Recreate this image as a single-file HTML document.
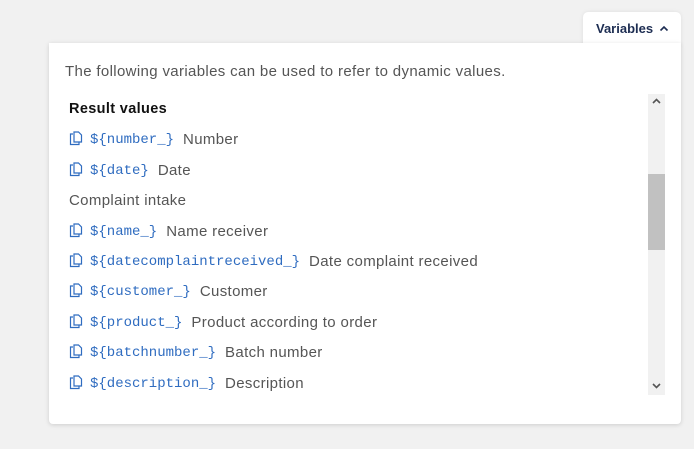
<!DOCTYPE html>
<html><head><style>
body{margin:0;width:694px;height:449px;background:#f1f1f1;font-family:"Liberation Sans",sans-serif;position:relative;overflow:hidden}
.tab{position:absolute;left:583px;top:12px;width:98px;height:34px;background:#fff;border-radius:5px 5px 0 0;box-shadow:0 0 4px rgba(0,0,0,.08)}
.tab span{position:absolute;left:13px;top:9px;font-size:13px;font-weight:bold;color:#1d2d52}
.panel{position:absolute;left:49px;top:43px;width:632px;height:381px;background:#fff;border-radius:0 0 4px 4px;box-shadow:0 1px 5px rgba(0,0,0,.15)}
.intro{position:absolute;left:16px;top:20px;font-size:15px;letter-spacing:0.35px;color:#555}
.row{position:absolute;left:20px;font-size:15px;letter-spacing:0.35px;color:#555;height:20px;line-height:20px;white-space:nowrap;margin-top:1px}
.row code{font-family:"Liberation Mono",monospace;color:#2f6cc0;font-size:14px;letter-spacing:0;margin-right:9px;vertical-align:1px}
.row svg{vertical-align:-2px;margin-right:6px}
.sb{position:absolute;left:599px;top:51px;width:17px;height:301px;background:#f1f1f1}
.th{position:absolute;left:0;top:80px;width:17px;height:76px;background:#c1c1c1}
</style></head><body>
<div class="tab"><span>Variables</span><svg style="position:absolute;left:76px;top:13px" width="10" height="7" viewBox="0 0 10 7"><path d="M1.5 5.5L5 2l3.5 3.5" stroke="#1d2d52" stroke-width="1.6" fill="none"/></svg></div>
<div class="panel">
<div class="intro">The following variables can be used to refer to dynamic values.</div>
<div class="row" style="top:55px;color:#111;font-weight:bold;font-size:14.5px">Result values</div>
<div class="row" style="top:86px"><svg width="15" height="15" viewBox="0 0 15 15" fill="none" stroke="#2f6cc0" stroke-width="1.2"><path d="M4 3H1.5v10.5H10V11"/><path d="M5 1h4.5L12.5 4v7H5z"/></svg><code>${number_}</code>Number</div>
<div class="row" style="top:117px"><svg width="15" height="15" viewBox="0 0 15 15" fill="none" stroke="#2f6cc0" stroke-width="1.2"><path d="M4 3H1.5v10.5H10V11"/><path d="M5 1h4.5L12.5 4v7H5z"/></svg><code>${date}</code>Date</div>
<div class="row" style="top:147px">Complaint intake</div>
<div class="row" style="top:178px"><svg width="15" height="15" viewBox="0 0 15 15" fill="none" stroke="#2f6cc0" stroke-width="1.2"><path d="M4 3H1.5v10.5H10V11"/><path d="M5 1h4.5L12.5 4v7H5z"/></svg><code>${name_}</code>Name receiver</div>
<div class="row" style="top:208px"><svg width="15" height="15" viewBox="0 0 15 15" fill="none" stroke="#2f6cc0" stroke-width="1.2"><path d="M4 3H1.5v10.5H10V11"/><path d="M5 1h4.5L12.5 4v7H5z"/></svg><code>${datecomplaintreceived_}</code>Date complaint received</div>
<div class="row" style="top:238px"><svg width="15" height="15" viewBox="0 0 15 15" fill="none" stroke="#2f6cc0" stroke-width="1.2"><path d="M4 3H1.5v10.5H10V11"/><path d="M5 1h4.5L12.5 4v7H5z"/></svg><code>${customer_}</code>Customer</div>
<div class="row" style="top:269px"><svg width="15" height="15" viewBox="0 0 15 15" fill="none" stroke="#2f6cc0" stroke-width="1.2"><path d="M4 3H1.5v10.5H10V11"/><path d="M5 1h4.5L12.5 4v7H5z"/></svg><code>${product_}</code>Product according to order</div>
<div class="row" style="top:299px"><svg width="15" height="15" viewBox="0 0 15 15" fill="none" stroke="#2f6cc0" stroke-width="1.2"><path d="M4 3H1.5v10.5H10V11"/><path d="M5 1h4.5L12.5 4v7H5z"/></svg><code>${batchnumber_}</code>Batch number</div>
<div class="row" style="top:330px"><svg width="15" height="15" viewBox="0 0 15 15" fill="none" stroke="#2f6cc0" stroke-width="1.2"><path d="M4 3H1.5v10.5H10V11"/><path d="M5 1h4.5L12.5 4v7H5z"/></svg><code>${description_}</code>Description</div>
<div class="sb"><svg style="position:absolute;left:4px;top:4px" width="9" height="6"><path d="M1 5L4.5 1.5 8 5" stroke="#555" stroke-width="1.6" fill="none"/></svg><div class="th"></div><svg style="position:absolute;left:4px;top:289px" width="9" height="6"><path d="M1 1L4.5 4.5 8 1" stroke="#555" stroke-width="1.6" fill="none"/></svg></div>
</div>
</body></html>
